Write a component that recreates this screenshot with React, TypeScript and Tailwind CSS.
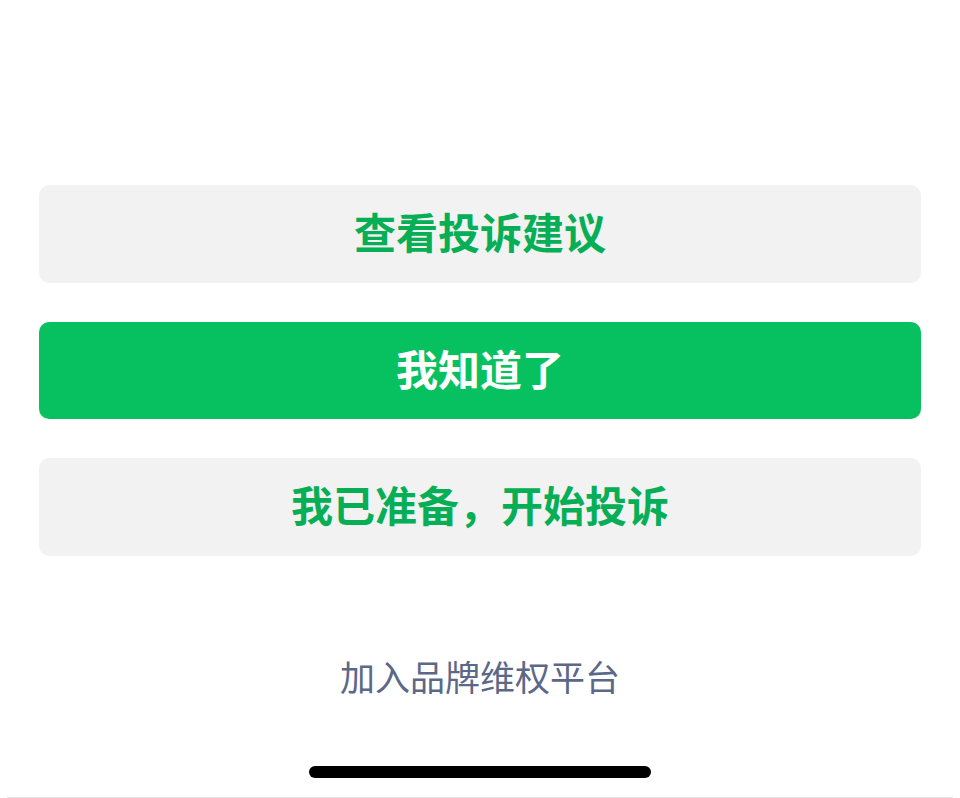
import React from "react";

const font = { fontFamily: '"Noto Sans CJK SC", "Noto Sans", sans-serif' };

export default function App() {
  return (
    <div className="w-[960px] h-[798px] bg-white flex flex-col overflow-hidden" style={font}>
      <div className="flex flex-col gap-[39px] px-[39px] pt-[185px]">
        <button className="h-[98px] w-full rounded-[10px] bg-[#f2f2f2] text-[#06ae56] text-[42px] font-semibold leading-none flex items-center justify-center pb-[6px]">
          查看投诉建议
        </button>
        <button className="h-[97px] w-full rounded-[10px] bg-[#07c160] text-white text-[42px] font-semibold leading-none flex items-center justify-center pb-[6px]">
          我知道了
        </button>
        <button className="h-[98px] w-full rounded-[10px] bg-[#f2f2f2] text-[#06ae56] text-[42px] font-semibold leading-none flex items-center justify-center pb-[6px]">
          我已准备，开始投诉
        </button>
      </div>
      <div className="mt-[100px] h-[42px] flex items-center justify-center text-[35px] leading-none text-[#5b6888] pb-[4px]">
        加入品牌维权平台
      </div>
      <div className="flex-1 flex flex-col items-center justify-end">
        <div className="w-[342px] h-[12px] rounded-full bg-black mb-[19px]" />
        <div className="w-full px-[7px]">
          <div className="h-[1px] w-full bg-[#e6e6e6]" />
        </div>
      </div>
    </div>
  );
}
